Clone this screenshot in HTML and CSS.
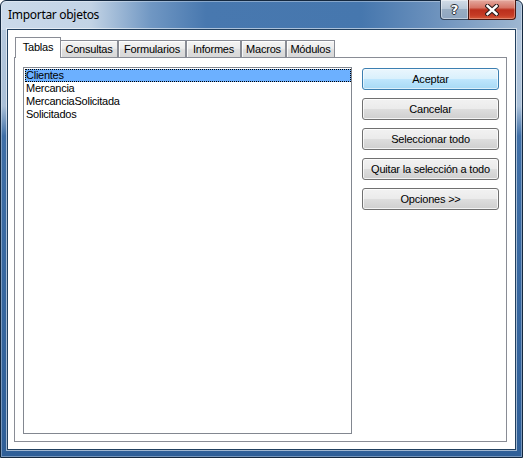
FILE: index.html
```html
<!DOCTYPE html>
<html lang="es">
<head>
<meta charset="utf-8">
<title>Importar objetos</title>
<link rel="stylesheet" href="styles.css">
</head>
<body>
<div class="window">
  <div class="titlebar">
    <span class="title">Importar objetos</span>
    <div class="caption-buttons">
      <button class="cap help"><span class="help-glyph">?</span></button>
      <button class="cap close">
        <svg width="14" height="12" viewBox="0 0 14 12">
          <path d="M2.5 2 L11.5 10 M11.5 2 L2.5 10" stroke="#2a1a1a" stroke-width="4.5" stroke-linecap="square" fill="none"/>
          <path d="M2.5 2 L11.5 10 M11.5 2 L2.5 10" stroke="#ffffff" stroke-width="2.4" stroke-linecap="square" fill="none"/>
        </svg>
      </button>
    </div>
  </div>
  <div class="client">
    <div class="tabs">
      <div class="tab active t-tablas">Tablas</div>
      <div class="tab t-consultas">Consultas</div>
      <div class="tab t-formularios">Formularios</div>
      <div class="tab t-informes">Informes</div>
      <div class="tab t-macros">Macros</div>
      <div class="tab t-modulos">Módulos</div>
    </div>
    <div class="panel">
      <ul class="list">
        <li class="item selected">Clientes</li>
        <li class="item">Mercancia</li>
        <li class="item">MercanciaSolicitada</li>
        <li class="item">Solicitados</li>
      </ul>
      <div class="actions">
        <button class="btn default">Aceptar</button>
        <button class="btn">Cancelar</button>
        <button class="btn">Seleccionar todo</button>
        <button class="btn">Quitar la selección a todo</button>
        <button class="btn">Opciones &gt;&gt;</button>
      </div>
    </div>
  </div>
</div>
</body>
</html>
```
FILE: styles.css
```css
html, body {
  margin: 0;
  padding: 0;
  background: #ffffff;
}

body {
  font-family: "Liberation Sans", Arial, sans-serif;
  font-size: 11px;
  color: #000;
}

/* window frame */
.window {
  width: 523px;
  height: 458px;
  box-sizing: border-box;
  border: 1px solid #14283f;
  border-radius: 6px 6px 0 0;
  padding: 0 6px 7px 6px;
  display: flex;
  flex-direction: column;
  background:
    linear-gradient(90deg, #cbdaea 0px, #c2d3e5 90px, #7097c3 150px, #4878af 205px, #4677ae 360px, #6a90bc 430px, #9fb7d1 522px) 0 0 / 100% 29px no-repeat,
    linear-gradient(180deg, #b9cbdf 0px, #aac0d8 105px, #3f6fa7 135px, #2f5f98 100%);
  box-shadow: inset 0 0 0 1px rgba(255, 255, 255, 0.35);
}

.titlebar {
  height: 28px;
  flex: none;
  display: flex;
  align-items: flex-start;
}

.title {
  font-family: "Noto Sans", "Open Sans", sans-serif;
  font-size: 12px;
  line-height: 16px;
  letter-spacing: -0.3px;
  margin: 6px 0 0 1px;
  color: #000;
}

.caption-buttons {
  margin-left: auto;
  margin-top: -1px;
  display: flex;
  height: 20px;
}

.cap {
  margin: 0;
  padding: 0;
  height: 20px;
  box-sizing: border-box;
  display: flex;
  align-items: center;
  justify-content: center;
  border: 1px solid #34465c;
  border-top: none;
}

.help {
  width: 28px;
  border-radius: 0 0 0 4px;
  border-right: none;
  background: linear-gradient(180deg, #d3dde8 0%, #b9c8d8 45%, #98adc3 50%, #8ea5bf 100%);
  box-shadow: inset 0 0 0 1px rgba(255, 255, 255, 0.45);
}

.help-glyph {
  font-family: "DejaVu Sans", sans-serif;
  font-weight: bold;
  font-size: 13px;
  line-height: 13px;
  color: #ffffff;
  text-shadow: -1px 0 #2b2f36, 1px 0 #2b2f36, 0 -1px #2b2f36, 0 1px #2b2f36;
}

.close {
  width: 48px;
  border-color: #4a1812;
  border-radius: 0 0 4px 0;
  background: linear-gradient(180deg, #e4aaa0 0%, #d67566 40%, #bb2f1c 52%, #c53b25 80%, #d55a3a 100%);
  box-shadow: inset 0 0 0 1px rgba(255, 220, 210, 0.35);
}

/* client area */
.client {
  height: 421px;
  flex: none;
  box-sizing: border-box;
  border: 1px solid #22405f;
  box-shadow: 0 0 0 1px rgba(255, 255, 255, 0.55);
  background: #ffffff;
  padding: 7px 8px 7px 6px;
  display: flex;
  flex-direction: column;
}

/* tab strip */
.tabs {
  display: flex;
  align-items: flex-start;
  height: 20px;
  padding-left: 1px;
  flex: none;
}

.tab {
  box-sizing: border-box;
  border: 1px solid #898c95;
  border-bottom: none;
  text-align: center;
  line-height: 13px;
  letter-spacing: -0.2px;
  white-space: nowrap;
}

.tab:not(.active) {
  margin-top: 3px;
  height: 17px;
  padding-top: 2px;
  background: linear-gradient(180deg, #f4f4f4 0%, #ececec 45%, #dedede 55%, #d8d8d8 100%);
  box-shadow: inset 1px 1px 0 rgba(255, 255, 255, 0.8);
}

.tab.active {
  height: 21px;
  padding-top: 3px;
  background: #ffffff;
  position: relative;
  z-index: 1;
  margin-bottom: -1px;
}

.t-tablas { width: 46px; }
.t-consultas { width: 58px; margin-left: -1px; }
.t-formularios { width: 68px; }
.t-informes { width: 55px; }
.t-macros { width: 45px; }
.t-modulos { width: 49px; }

.panel {
  flex: none;
  height: 385px;
  box-sizing: border-box;
  border: 1px solid #898c95;
  background: #ffffff;
  padding: 9px 7px 7px 8px;
  display: flex;
  gap: 10px;
}

/* object list */
.list {
  list-style: none;
  margin: 0;
  width: 329px;
  height: 367px;
  box-sizing: border-box;
  border: 1px solid #828790;
  padding: 1px 0 0 1px;
  flex: none;
}

.item {
  height: 13px;
  line-height: 13px;
  padding-left: 1px;
  letter-spacing: -0.25px;
  white-space: nowrap;
}

.item.selected {
  background: #6cb0ff;
  outline: 1px dotted #000;
  outline-offset: -1px;
}

/* command buttons */
.actions {
  display: flex;
  flex-direction: column;
  gap: 8px;
  margin-top: 1px;
  width: 137px;
  flex: none;
}

.btn {
  margin: 0;
  height: 22px;
  padding: 0;
  box-sizing: border-box;
  font-family: "Liberation Sans", Arial, sans-serif;
  font-size: 11px;
  letter-spacing: -0.2px;
  color: #000;
  border: 1px solid #707070;
  border-radius: 3px;
  background: linear-gradient(180deg, #f2f2f2 0%, #ebebeb 48%, #dddddd 52%, #cfcfcf 100%);
  box-shadow: inset 0 0 0 1px rgba(255, 255, 255, 0.75);
  white-space: nowrap;
}

.btn.default {
  border-color: #3c7fb1;
  background: linear-gradient(180deg, #eaf6fd 0%, #d9f0fc 48%, #bee6fd 52%, #a7d9f5 100%);
  box-shadow: inset 0 0 0 1px rgba(255, 255, 255, 0.6);
}
```
